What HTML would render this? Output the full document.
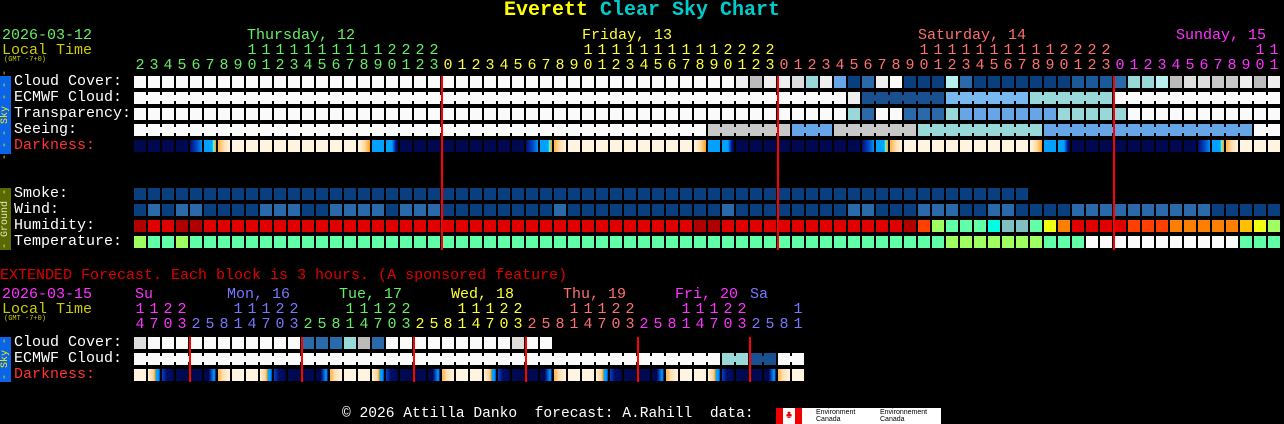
<!DOCTYPE html>
<html><head><meta charset="utf-8">
<style>
html,body{margin:0;padding:0;background:#000;width:1284px;height:424px;overflow:hidden;position:relative;font-family:"Liberation Mono",monospace;}
.t{position:absolute;white-space:pre;font-size:15px;line-height:15px;}
.c{position:absolute;width:12px;height:12px;}
.d{position:absolute;width:12px;text-align:center;font-size:15px;line-height:15px;}
.bar{position:absolute;left:0;width:11px;}
.vt{position:absolute;left:0;width:11px;display:flex;align-items:center;justify-content:center;}
.vt span{writing-mode:vertical-rl;transform:rotate(180deg);font-size:10px;line-height:11px;white-space:pre;}
.red{position:absolute;width:2px;background:#f00;}
</style></head><body>
<div class="t" style="left:0;width:1284px;text-align:center;top:1px;font-size:20px;line-height:20px;font-weight:bold;"><span style="color:#ffff00">Everett</span> <span style="color:#00cccc">Clear Sky Chart</span></div>

<div class="t" style="left:2px;top:28px;color:#66ee66">2026-03-12</div>
<div class="t" style="left:2px;top:43px;color:#cccc00">Local Time</div>
<div class="t" style="left:4px;top:57px;color:#cccc00;font-size:7px;line-height:7px">(GMT -7+0)</div>
<div class="t" style="left:247px;top:28px;color:#66ee66">Thursday, 12</div>
<div class="t" style="left:582px;top:28px;color:#ffff33">Friday, 13</div>
<div class="t" style="left:918px;top:28px;color:#ff7070">Saturday, 14</div>
<div class="t" style="left:1176px;top:28px;color:#ff33ff">Sunday, 15</div>

<div class="t" style="left:14px;top:74px;color:#fff">Cloud Cover:</div>
<div class="t" style="left:14px;top:90px;color:#fff">ECMWF Cloud:</div>
<div class="t" style="left:14px;top:106px;color:#fff">Transparency:</div>
<div class="t" style="left:14px;top:122px;color:#fff">Seeing:</div>
<div class="t" style="left:14px;top:138px;color:#ff3333">Darkness:</div>
<div class="t" style="left:14px;top:186px;color:#fff">Smoke:</div>
<div class="t" style="left:14px;top:202px;color:#fff">Wind:</div>
<div class="t" style="left:14px;top:218px;color:#fff">Humidity:</div>
<div class="t" style="left:14px;top:234px;color:#fff">Temperature:</div>

<div class="vt" style="top:76px;height:78px;background:#0a64e6"><span style="color:#ffee00">- - - Sky - - -</span></div>
<div class="vt" style="top:188px;height:62px;background:#5a6a00"><span style="color:#e8e8c0">- Ground -</span></div>

<div class="t" style="left:0;top:268px;color:#e00000">EXTENDED Forecast. Each block is 3 hours. (A sponsored feature)</div>
<div class="t" style="left:2px;top:287px;color:#ff33ff">2026-03-15</div>
<div class="t" style="left:2px;top:302px;color:#cccc00">Local Time</div>
<div class="t" style="left:4px;top:316px;color:#cccc00;font-size:7px;line-height:7px">(GMT -7+0)</div>
<div class="t" style="left:135px;top:287px;color:#ff33ff">Su</div>
<div class="t" style="left:227px;top:287px;color:#7777ff">Mon, 16</div>
<div class="t" style="left:339px;top:287px;color:#66ee66">Tue, 17</div>
<div class="t" style="left:451px;top:287px;color:#ffff33">Wed, 18</div>
<div class="t" style="left:563px;top:287px;color:#ff7070">Thu, 19</div>
<div class="t" style="left:675px;top:287px;color:#ff33ff">Fri, 20</div>
<div class="t" style="left:750px;top:287px;color:#7777ff">Sa</div>
<div class="t" style="left:14px;top:335px;color:#fff">Cloud Cover:</div>
<div class="t" style="left:14px;top:351px;color:#fff">ECMWF Cloud:</div>
<div class="t" style="left:14px;top:367px;color:#ff3333">Darkness:</div>
<div class="vt" style="top:337px;height:45px;background:#0a64e6"><span style="color:#ffee00">- Sky -</span></div>

<div class="t" style="left:342px;top:407px;color:#fff;font-size:14.6px">© 2026 Attilla Danko  forecast: A.Rahill  data:</div>
<div style="position:absolute;left:776px;top:408px;width:165px;height:16px;background:#fff">
 <div style="position:absolute;left:0;top:0;width:7px;height:16px;background:#e00"></div>
 <div style="position:absolute;left:19px;top:0;width:7px;height:16px;background:#e00"></div>
 <div style="position:absolute;left:8px;top:2px;width:10px;text-align:center;color:#e00;font-size:11px;line-height:12px">♣</div>
 <div style="position:absolute;left:40px;top:1px;font-size:7px;line-height:7px;color:#000;font-family:'Liberation Sans',sans-serif">Environment<br>Canada</div>
 <div style="position:absolute;left:104px;top:1px;font-size:7px;line-height:7px;color:#000;font-family:'Liberation Sans',sans-serif">Environnement<br>Canada</div>
</div>

<script>
var P={W:'#fafafa',E:'#eeeeee',D:'#dddddd',G:'#c8c8c8',g:'#bbbbbb',T:'#98d8d8',C:'#b8f0f0',M:'#66a6e6',L:'#7ab8f0',N:'#0a3f7f',B:'#2a6aaa',b:'#1a5a9a',K:'#1a5090',
r:'#e00000',R:'#b00000',o:'#ff4000',O:'#ff8000',y:'#f0ff10',Y:'#ffc000',l:'#a0ff60',m:'#60ffa8',c:'#00ffe0',s:'#80c0c0'};
function rep(ch,n){return Array(n+1).join(ch);}
var rows=[
 [76,rep('W',43)+'EgE'+'EDTEMNBEWNNNCBNNNNNNNbbb'+'BTTCgDDGGEgE',0],
 [92,rep('W',51)+'E'+rep('K',6)+rep('L',6)+rep('T',6)+rep('W',12),1],
 [108,rep('W',51)+'TBWWBBBT'+rep('M',7)+rep('T',5)+rep('W',11),0],
 [124,rep('W',41)+rep('G',6)+rep('M',3)+rep('G',6)+rep('T',9)+rep('M',15)+'WW',1],
 [188,rep('N',64),0],
 [204,'NBNBBNNNNBBBNNBBBBNBBB'+'NNNNNNNNBNNNNNNNNNNNBNNNNNNNN'+'BBNNNBBBNNBBNNNNBBBBBBBBBBNNNNN',0],
 [220,'RrrRR'+rep('r',35)+'RR'+rep('r',13)+'Rolmmmcssmy'+'Orrrr'+'ooo'+'OOOOO'+'Yyl',0],
 [236,'lmml'+rep('m',54)+rep('l',7)+'mmm'+rep('W',11)+'mmm',0]
];
var ext=[
 [337,'DWWW'+rep('W',8)+'BBBTgBWW'+rep('W',7)+'DWW',0],
 [353,rep('W',42)+'TTKKWW',1]
];
var html='';
function cell(x,y,bg){html+='<div class="c" style="left:'+x+'px;top:'+y+'px;background:'+bg+'"></div>';}
function drawRows(rs){rs.forEach(function(r){var s=r[1];for(var i=0;i<s.length;i++){var k=s[i];if(!P[k])continue;var x=134+14*i;cell(x,r[0],P[k]);
 if(r[2]&&i+1<s.length&&s[i+1]==k){html+='<div style="position:absolute;left:'+(x+12)+'px;top:'+(r[0]+3)+'px;width:2px;height:6px;background:'+P[k]+'"></div>';}}});}
drawRows(rows);drawRows(ext);
var NV='#00084f',CR='#fff4e0';
function dark(h){
 if(h==6)return 'linear-gradient(to right,#001070,#0040c0 50%,#0090f0)';
 if(h==7)return 'linear-gradient(to right,#00a0ff 70%,#40ffe0 75%,#40ffe0 85%,#ffa020 90%)';
 if(h==8)return 'linear-gradient(to right,#ffb040,#ffe0b0 50%,'+CR+')';
 if(h>=9&&h<=17)return CR;
 if(h==18)return 'linear-gradient(to right,'+CR+',#ffe0b0 50%,#ffa020)';
 if(h==19)return '#00a0ff';
 if(h==20)return 'linear-gradient(to right,#00a0ff 50%,#0040c0 70%,#001070 85%,'+NV+')';
 return NV;}
for(var i=0;i<82;i++){cell(134+14*i,140,dark((2+i)%24));}
function edark(h){
 if(h==5)return 'linear-gradient(to right,'+NV+' 40%,#0040c0 60%,#00a0ff 85%,'+NV+')';
 if(h==8)return 'linear-gradient(to right,#ffb040,#ffe0b0 40%,'+CR+')';
 if(h==11||h==14)return CR;
 if(h==17)return 'linear-gradient(to right,'+CR+',#ffd090 45%,#ffa020 60%,#00a0ff 65%,#00a0ff 85%,#0040c0)';
 if(h==20)return 'linear-gradient(to right,#0040c0,#001070 40%,'+NV+')';
 return NV;}
for(var i=0;i<48;i++){cell(134+14*i,369,edark((14+3*i)%24));}
// main hour digits
var dc=['#66ee66','#ffff33','#ff7070','#ff33ff'];
for(var i=0;i<82;i++){var h=(2+i)%24;var day=i<22?0:Math.floor((i-22)/24)+1;var x=134+14*i;var col=dc[day];
 if(h>=10)html+='<div class="d" style="left:'+x+'px;top:43px;color:'+col+'">'+Math.floor(h/10)+'</div>';
 html+='<div class="d" style="left:'+x+'px;top:58px;color:'+col+'">'+(h%10)+'</div>';}
var ec=['#ff33ff','#7777ff','#66ee66','#ffff33','#ff7070','#ff33ff','#7777ff'];
for(var i=0;i<48;i++){var h=(14+3*i)%24;var day=i<4?0:Math.floor((i-4)/8)+1;var x=134+14*i;var col=ec[day];
 if(h>=10)html+='<div class="d" style="left:'+x+'px;top:302px;color:'+col+'">'+Math.floor(h/10)+'</div>';
 html+='<div class="d" style="left:'+x+'px;top:317px;color:'+col+'">'+(h%10)+'</div>';}
[441,777,1113].forEach(function(x){html+='<div class="red" style="left:'+x+'px;top:76px;height:174px"></div>';});
[189,301,413,525,637,749].forEach(function(x){html+='<div class="red" style="left:'+x+'px;top:337px;height:45px"></div>';});
document.body.insertAdjacentHTML('beforeend',html);
</script>
</body></html>
